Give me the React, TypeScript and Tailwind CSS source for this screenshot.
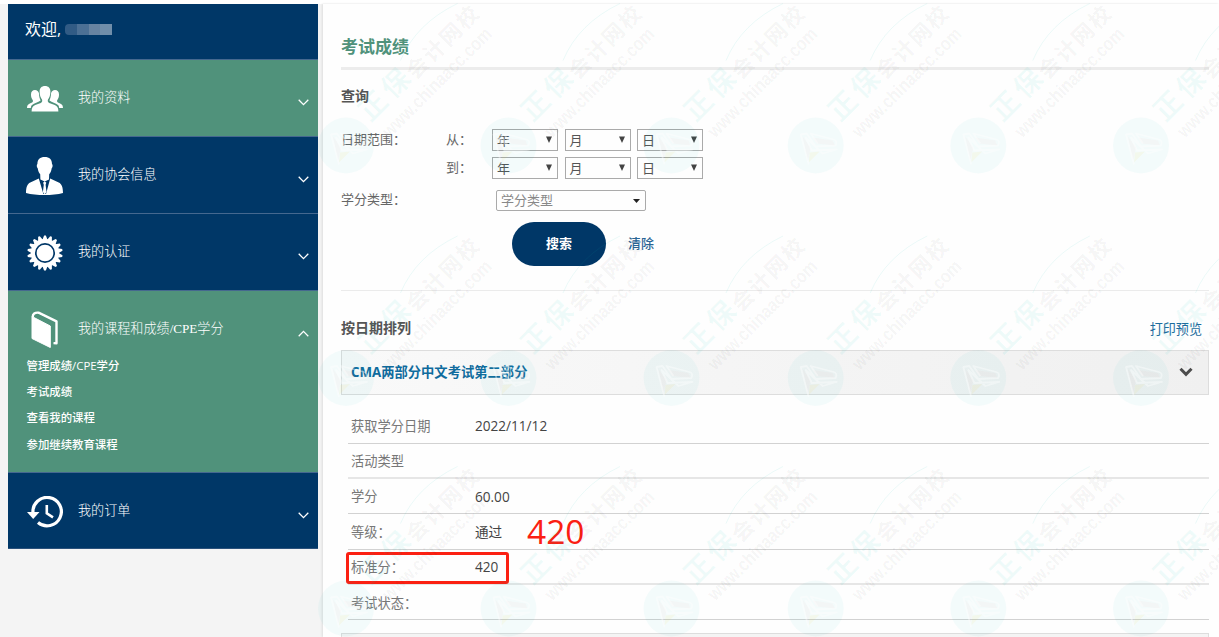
import type { ReactNode } from 'react';
import clsx from 'clsx';

const results = [
  { label: '获取学分日期', value: '2022/11/12', row: 'h-[35px] pt-px', line: 'border-b border-[#d2d2d2]' },
  { label: '活动类型', value: '', row: 'h-[35px] pt-[3px]', line: 'border-b-2 border-[#e6e6e6]' },
  { label: '学分', value: '60.00', row: 'h-[35px] pt-0.5', line: 'border-b border-[#d2d2d2]' },
  { label: '等级：', value: '通过', row: 'h-[36px] pt-0.5', line: 'border-b border-[#d2d2d2]' },
  { label: '标准分：', value: '420', row: 'h-[35px] pt-0.5', line: 'border-b-2 border-[#e6e6e6]' },
  { label: '考试状态：', value: '', row: 'h-[35px] pt-[3px]', line: 'border-b border-[#d2d2d2]' },
];

const courseLinks = ['管理成绩/CPE学分', '考试成绩', '查看我的课程', '参加继续教育课程'];

const markColumns = [346, 508.5, 671.5, 815.7, 978.3, 1141];
const markRows = [145.5, 378, 608.5];

function UsersIcon() {
  return (
    <svg width="36" height="26" viewBox="0 0 36 26" fill="#fff">
      <path d="M8 4c2 0 3.6 1.300 4 3.400 0 3 .8 5.200 1.600 7.100-2.600 1.600-6.300 2.800-8.600 4.500-.8.700-1 1.900-1.200 3H0c.1-2 .5-3.400 2-4.100 1.900-.9 3.600-1.200 3.900-2.400.2-1-.2-1.600-.8-2.500C4.300 11.500 4 10.300 4 8.400 4 5.700 5.500 4 8 4z" />
      <path d="M28 4c-2 0-3.600 1.300-4 3.400 0 3-.8 5.200-1.600 7.100 2.600 1.600 6.300 2.800 8.600 4.500.8.700 1 1.900 1.200 3H36c-.1-2-.5-3.400-2-4.100-1.900-.9-3.600-1.200-3.900-2.400-.2-1 .2-1.600.8-2.500.8-1.500 1.100-2.700 1.100-4.600C32 5.700 30.500 4 28 4z" />
      <path d="M18 0c3.400 0 5.400 2.100 5.400 5.600 0 3.500-1 6.200-2.400 8-.5 1.600-.2 2.600 1.200 3.300l5.600 2.200c2.500 1 3.500 2.700 3.600 6.500H4.600c.1-3.800 1.100-5.500 3.600-6.500l5.600-2.200c1.400-.7 1.700-1.700 1.200-3.300-1.400-1.800-2.400-4.500-2.400-8C12.600 2.100 14.600 0 18 0z" />
    </svg>
  );
}

function PersonIcon() {
  return (
    <svg width="37" height="38" viewBox="0 0 37 38" fill="#fff">
      <path d="M18.700 0c4.700 0 7.300 2.600 7.300 7 .9.600.8 3-.3 4.300-.4 3-1.500 4.800-2.500 6l-.2 5.200-4.300 2-4.300-2-.2-5.200c-1-1.200-2.100-3-2.500-6-1.100-1.300-1.200-3.700-.3-4.300 0-4.400 2.600-7 7.300-7z" />
      <path d="M12.800 21.500 4.300 25.600C1.200 27 0 30.500 0 36c5 1.600 12 2 18.500 2S32 37.600 37 36c0-5.500-1.200-9-4.300-10.400l-8.500-4.100L20 37h-2.600z" />
      <path d="m18.700 24.300 1.600 1.500-.7 1.900.9 7.300-1.800 2.500-1.800-2.500.9-7.300-.7-1.900z" />
    </svg>
  );
}

function BadgeIcon() {
  return (
    <svg width="36" height="36" viewBox="-18 -18 36 36" fill="#fff">
      {Array.from({ length: 18 }, (_, i) => (
        <path key={i} d="M-2.600-13-.9-17.600H.9L2.600-13z" transform={`rotate(${i * 20})`} />
      ))}
      <circle r="14" />
      <circle r="9.200" stroke="#003767" strokeWidth="1.700" />
    </svg>
  );
}

function BookIcon() {
  return (
    <svg width="28" height="37" viewBox="0 0 28 37" fill="none">
      <path d="M1 5.500 19.300 15v21.500L1 27.500z" fill="#fff" stroke="#fff" strokeLinejoin="round" />
      <path d="M1.800 6C1.500 3 4 1.300 7.500 1.700L25.500 10.300v22l-3-.2" stroke="#fff" strokeWidth="2.400" strokeLinejoin="round" />
      <path d="M5 4.800c1.500-.8 3-.6 4 0l10.500 5.700" stroke="#50927b" strokeWidth="1.500" />
    </svg>
  );
}

function HistoryIcon() {
  return (
    <svg width="36" height="32" viewBox="0 0 36 32" fill="none">
      <path d="M6 17A14.200 14.200 0 1 1 11 26.500" stroke="#fff" strokeWidth="3.200" />
      <path d="M0 16h12.500L6.200 23z" fill="#fff" />
      <path d="M19.800 9v8.300l6.200 4" stroke="#fff" strokeWidth="2.600" />
    </svg>
  );
}

function NavItem({ icon, label, green, open, className, children }: {
  icon: ReactNode;
  label: string;
  green?: boolean;
  open?: boolean;
  className?: string;
  children?: ReactNode;
}) {
  return (
    <li className={clsx('border-t border-[#45688f]', green ? 'bg-[#50927b]' : 'bg-[#003767]', className)}>
      <div className="flex h-[76px] items-start pr-[9.500px]">
        <span className="ml-[18px] flex h-[76px] w-[37px] items-center justify-center pt-px">{icon}</span>
        <span className="ml-[15px] mt-[28px] flex-1 font-['Liberation_Serif','Noto_Sans_CJK_SC',sans-serif] text-[13.100px] leading-5 font-light text-white">
          {label}
        </span>
        <svg className={clsx('mt-[39px]', open && 'rotate-180')} width="11" height="7" viewBox="0 0 11 7" fill="none">
          <path d="m.7.8 4.800 4.800L10.300.8" stroke="#fff" strokeWidth="1.300" />
        </svg>
      </div>
      {children}
    </li>
  );
}

function DateSelects() {
  return (
    <div className="flex gap-[6.500px]">
      {['年', '月', '日'].map((unit) => (
        <div key={unit} className="flex h-[22px] w-[66px] items-center justify-between border border-[#aaa] pr-[5px] pl-1">
          <span className="text-[13px] leading-5 text-[#555]">{unit}</span>
          <svg width="6" height="7" viewBox="0 0 6 7" className="mb-0.5">
            <path d="M0 .5h6L3 7z" fill="#444" />
          </svg>
        </div>
      ))}
    </div>
  );
}

function Watermark() {
  return (
    <svg className="pointer-events-none absolute inset-0" width="1219" height="637">
      {markRows.map((y) =>
        markColumns.map((x) => (
          <g key={`${x}-${y}`} transform={`translate(${x} ${y})`}>
            <circle r="28" fill="#00beb4" fillOpacity=".045" />
            <path d="M-3-8 17-5 19 0 1-2zM-13-9l8 11-3 14z" fill="#ff5060" fillOpacity=".03" />
            <path d="M-6 7 4 6-7 17z" fill="#ffc800" fillOpacity=".06" />
            <path
              d="m-7 19-8-30 6-1L0 1l20-1q2-5-2-6L-5-12 2-2M-10-8l6 13 25-1-14 4z"
              fill="none"
              stroke="#fff"
              strokeOpacity=".4"
              strokeWidth="1.800"
              strokeLinejoin="round"
            />
            <path d="M54.500-85Q70-122 111.500-142" fill="none" stroke="#00beb4" strokeOpacity=".08" strokeWidth="1" />
            <g transform="rotate(-45)" className="font-['Noto_Sans_CJK_SC',sans-serif] font-bold">
              <text x="33" y="1" fontSize="28" textLength="60" fill="#00beb4" fillOpacity=".06">正保</text>
              <text x="95" y="3" fontSize="21.500" textLength="92" fill="#000" fillOpacity=".05">会计网校</text>
              <text
                x="36"
                y="26"
                textLength="146"
                lengthAdjust="spacingAndGlyphs"
                fill="#000"
                fillOpacity=".05"
                className="font-['Liberation_Sans',sans-serif] text-[19px] font-bold"
              >
                www.chinaacc.com
              </text>
            </g>
          </g>
        )),
      )}
    </svg>
  );
}

export default function App() {
  return (
    <div className="relative h-[637px] w-[1219px] overflow-hidden font-['Open_Sans','Noto_Sans_CJK_SC',sans-serif] text-[13px] text-[#666]">
      <div className="flex h-full border-t-4 border-white bg-[#f4f4f4]">
        <aside className="ml-[8px] w-[310px] shrink-0">
          <div className="flex h-[55px] items-center bg-[#003767] pl-[17px] text-[16px] text-white">
            <span className="-mt-1.5 w-[40px]">欢迎,</span>
            <span className="-mt-1 flex h-[11px] w-[47px] overflow-hidden rounded-l">
              <i className="flex-1 bg-[#315b85]" />
              <i className="flex-1 bg-[#4c7095]" />
              <i className="flex-1 bg-[#6783a1]" />
              <i className="flex-1 bg-[#708eaa]" />
            </span>
          </div>
          <ul className="border-b border-[#2b527c]">
            <NavItem icon={<UsersIcon />} label="我的资料" green />
            <NavItem icon={<PersonIcon />} label="我的协会信息" />
            <NavItem icon={<BadgeIcon />} label="我的认证" />
            <NavItem icon={<BookIcon />} label="我的课程和成绩/CPE学分" green open className="h-[182px]">
              <ul className="-mt-[14px] pl-[18.500px] text-[11.400px] leading-[26.200px] font-medium text-white">
                {courseLinks.map((link) => (
                  <li key={link}>{link}</li>
                ))}
              </ul>
            </NavItem>
            <NavItem icon={<HistoryIcon />} label="我的订单" className="h-[76px]" />
          </ul>
        </aside>

        <main className="ml-[5px] min-w-0 flex-1 overflow-hidden bg-[#fefefe] pr-[10px] pl-[18px] shadow-[-1px_0_2px_#ddd]">
          <h1 className="h-[66px] border-b-3 border-[#ececec] pt-[31px] text-[17px] leading-6 font-bold text-[#50927b]">考试成绩</h1>
          <h2 className="mt-[16px] text-[14px] leading-5 font-bold text-[#555]">查询</h2>

          <div className="mt-[23px] flex h-[28px] items-start leading-[20px]">
            <span className="w-[105px]">日期范围：</span>
            <span className="w-[46px]">从：</span>
            <DateSelects />
          </div>
          <div className="flex h-[33px] items-start leading-[20px]">
            <span className="ml-[105px] w-[46px]">到：</span>
            <DateSelects />
          </div>
          <div className="flex h-[32px] items-start leading-[19px]">
            <span className="w-[155px]">学分类型：</span>
            <div className="flex h-[21px] w-[150px] items-center justify-between rounded-xs border border-[#aaa] pr-[5px] pl-1 text-[#888]">
              学分类型
              <svg width="7" height="4" viewBox="0 0 7 4">
                <path d="M0 0h7L3.500 4z" fill="#222" />
              </svg>
            </div>
          </div>
          <div className="flex items-center">
            <button className="ml-[171px] h-[44px] w-[94px] rounded-full bg-[#003767] font-bold text-white">搜索</button>
            <a href="#" className="ml-[22px] font-medium text-[#2a6595]">清除</a>
          </div>

          <div className="mt-[24px] flex h-[60px] items-center justify-between border-t border-[#ebebeb] pt-[14px] pr-[7px]">
            <h2 className="text-[14px] font-bold text-[#555]">按日期排列</h2>
            <a href="#" className="pt-1 text-[13.100px] text-[#1d6c9d]">打印预览</a>
          </div>
          <div className="flex h-[45px] items-center justify-between border border-[#ddd] bg-linear-to-r from-[#f9f9f9] to-[#f0f0f0] pr-[15px] pl-[9px]">
            <span className="text-[13.300px] font-bold text-[#0f6b9d]">CMA两部分中文考试第二部分</span>
            <svg width="14" height="10" viewBox="0 0 14 10" fill="none" className="-mt-px">
              <path d="m1.500 1.800 5.500 5.500 5.500-5.500" stroke="#4c4c4c" strokeWidth="3" />
            </svg>
          </div>

          <dl className="mt-[14px] ml-[7px]">
            {results.map(({ label, value, row, line }) => (
              <div key={label} className={clsx('relative flex items-center pl-[3px]', row, line)}>
                <dt className="w-[124px] text-[13.250px] text-[#777]">{label}</dt>
                <dd className="text-[13.600px] text-[#444]">{value}</dd>
                {value === '通过' && (
                  <span className="absolute -top-px left-[179px] text-[33.500px] leading-[36px] text-[#fb2012]">420</span>
                )}
                {value === '420' && (
                  <span className="absolute top-[2px] -left-[2px] h-[32px] w-[163px] rounded-[3px] border-3 border-[#fb2012]" />
                )}
              </div>
            ))}
          </dl>
          <div className="mt-[13px] h-[45px] border border-[#ddd] bg-[#f4f4f4]" />
        </main>
      </div>
      <Watermark />
    </div>
  );
}
